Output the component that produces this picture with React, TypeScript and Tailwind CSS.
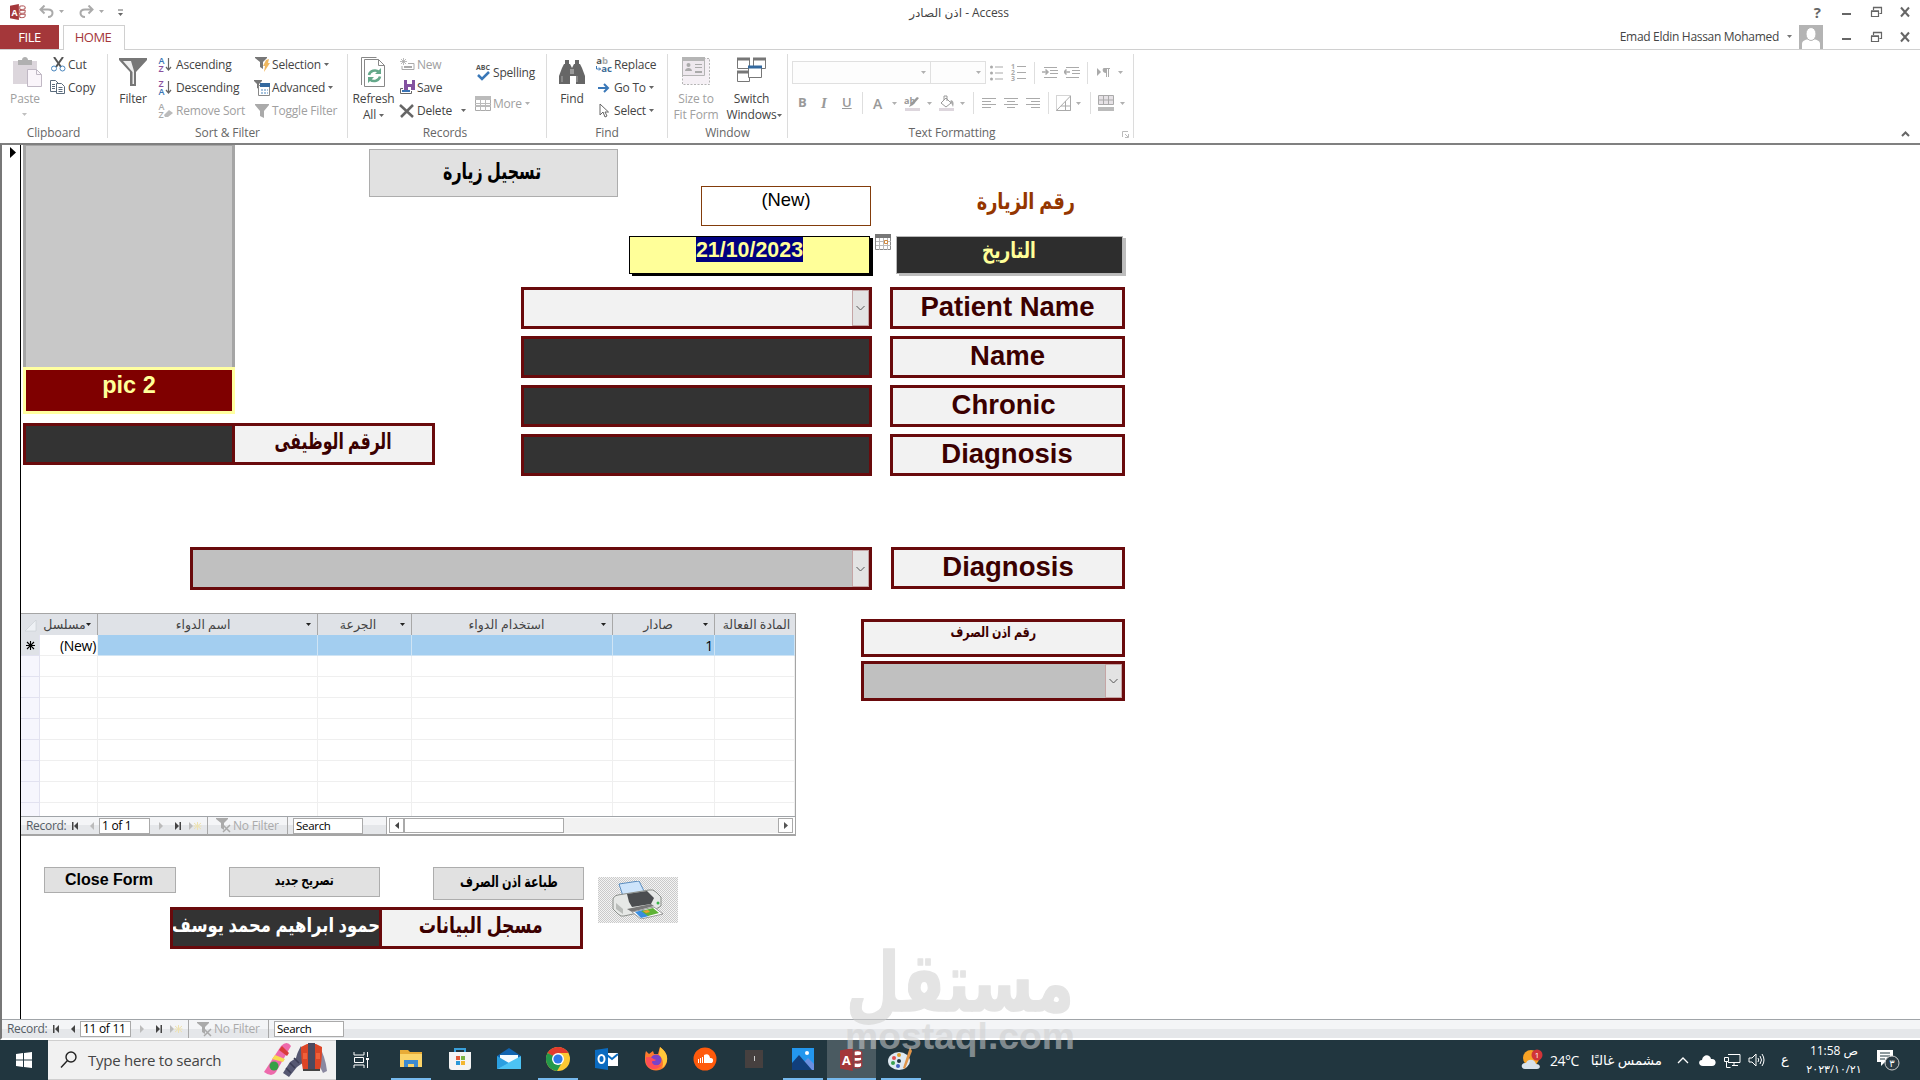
import { FC, ReactNode } from "react";
import clsx from "clsx";

const UI = "font-['Open_Sans','DejaVu_Sans',sans-serif]";
const ARIAL = "font-['Liberation_Sans','DejaVu_Sans',sans-serif]";

interface ICommand {
    icon: ReactNode;
    text: string;
    off?: boolean;
    arrow?: boolean;
    className?: string;
}

const Arrow: FC<{ className?: string }> = ({ className }) => (
    <svg width="5" height="3" viewBox="0 0 5 3" className={clsx("shrink-0", className ?? "text-[#666]")}>
        <path d="M0 0h5L2.5 3z" fill="currentColor" />
    </svg>
);

const Command: FC<ICommand> = ({ icon, text, off, arrow, className }) => (
    <div className={clsx("flex h-[23px] items-center whitespace-nowrap text-[12px] tracking-[-0.2px]", off ? "text-[#a0a0a0]" : "text-[#444]", className)}>
        <span className="mr-[2px] flex w-4 shrink-0 justify-center">{icon}</span>
        {text}
        {arrow && <Arrow className={clsx("ml-[3px]", off ? "text-[#b0b0b0]" : "text-[#666]")} />}
    </div>
);

const Group: FC<{ label: string; width: string; labelClass?: string; children: ReactNode }> = ({ label, width, labelClass, children }) => (
    <div className={clsx("mt-1 flex h-[84px] shrink-0 flex-col border-r border-[#dcdcdc]", width)}>
        <div className="-mt-px flex h-[71px]">{children}</div>
        <div className={clsx("mt-px h-[14px] text-center text-[12px] leading-[18px] tracking-[-0.1px] text-[#666]", labelClass)}>{label}</div>
    </div>
);

const BigButton: FC<{ icon: ReactNode; lines: string[]; off?: boolean; arrow?: boolean; className?: string }> = ({ icon, lines, off, arrow, className }) => (
    <div className={clsx("flex shrink-0 flex-col items-center pt-[4px] text-[12px] leading-4 tracking-[-0.15px]", off ? "text-[#a0a0a0]" : "text-[#444]", className)}>
        <div className="mb-[3px] flex h-[31px] items-start">{icon}</div>
        {lines.map((line, i) => (
            <div key={line} className="flex items-center whitespace-nowrap">
                {line}
                {arrow && i === lines.length - 1 && <Arrow className="ml-[3px] text-[#666]" />}
            </div>
        ))}
    </div>
);

const Funnel: FC<{ size?: number; color?: string }> = ({ size = 14, color = "#777" }) => (
    <svg width={size} height={size} viewBox="0 0 14 14">
        <path d="M0 0h14v1L9 7v7L5 12V7L0 1z" fill={color} />
    </svg>
);

const AccessLogo: FC<{ size: number }> = ({ size }) => (
    <svg width={size} height={size} viewBox="0 0 18 18">
        <path d="M0 2l10-2v18L0 16z" fill="#a4373a" />
        <path d="M11 2.500c3-.8 6-.3 6 .8v2c-2 1-4 1-6 .7zM11 7c2 .6 4.500 .3 6-.3v3c-2 .9-4 .9-6 .6zM11 11.500c2 .5 4.500 .3 6-.4v3c-1 1.300-4 1.500-6 1z" fill="#fff" stroke="#a4373a" strokeWidth="1" />
        <text x="5" y="13" textAnchor="middle" fontSize="10" fontWeight="700" fontFamily="Open Sans" fill="#fff">A</text>
    </svg>
);

const SortIcon: FC<{ top: string; bottom: string; colors: string[]; erase?: boolean }> = ({ top, bottom, colors, erase }) => (
    <div className="flex items-center">
        <div className="flex flex-col text-[9px] leading-[8px] font-semibold tracking-normal">
            <span style={{ color: colors[0] }}>{top}</span>
            <span style={{ color: colors[1] }}>{bottom}</span>
        </div>
        <svg width="9" height="17" viewBox="0 0 9 17">
            {erase ? (
                <path d="M0 13l5-5 4 3-5 4H1z" fill="#bbb" />
            ) : (
                <path d="M4.500 2v12M2 11l2.500 3L7 11" stroke="#666" fill="none" strokeWidth="1.200" />
            )}
        </svg>
    </div>
);

const WindowButtons: FC<{ help?: boolean }> = ({ help }) => (
    <div className="flex h-[24px] items-center text-[#666]">
        {help && <span className="mr-[20px] text-[15px] font-bold">?</span>}
        <svg width="70" height="12" viewBox="0 0 70 12" fill="none" stroke="currentColor">
            <path d="M1 8h9" strokeWidth="2" />
            <path d="M30.500 5.500h7v5h-7zM30 5.500h8M32.500 4V1.500h8v6h-2" strokeWidth="1.200" />
            <path d="M32 1.500h9M30 5h8" strokeWidth="1.500" />
            <path d="M60 1.500l8 9M68 1.500l-8 9" strokeWidth="2" />
        </svg>
    </div>
);

const TitleBar: FC = () => (
    <div className="flex h-[25px] shrink-0 items-start">
        <div className="flex h-[23px] w-[600px] items-center pl-[10px]">
            <AccessLogo size={16} />
            <svg className="ml-[13px]" width="86" height="14" viewBox="0 0 86 14" fill="none" stroke="#aaa">
                <path d="M2 4.500h7c3 0 4.500 1.500 4.500 3.500S12 12 9 12M5.500 .5l-4 4 4 4" strokeWidth="2" />
                <path d="M20 5h5l-2.500 3zM60 5h5l-2.500 3z" fill="#aaa" stroke="none" />
                <path d="M53 4.500h-7c-3 0-4.500 1.500-4.500 3.500s1.500 4 4.500 4M49.500 .5l4 4-4 4" strokeWidth="2" />
                <path d="M79 5h5" stroke="#666" />
                <path d="M79 8h5l-2.500 3z" fill="#666" stroke="none" />
            </svg>
        </div>
        <div className="w-[718px] text-center text-[12px] leading-[25px] tracking-[-0.1px] text-[#444]">اذن الصادر - Access</div>
        <div className="ml-auto pr-[9px]"><WindowButtons help /></div>
    </div>
);

const TabRow: FC = () => (
    <div className="flex h-[25px] shrink-0 border-b border-[#d0d0d0] text-[13px] leading-[24px]">
        <div className="w-[59px] bg-[#a4373a] text-center tracking-[-0.5px] text-white">FILE</div>
        <div className="ml-1 h-[25px] w-[62px] border border-b-0 border-[#d0d0d0] bg-white pr-[2px] text-center leading-[22px] tracking-[-0.5px] text-[#a4373a]">HOME</div>
        <div className="ml-auto flex text-[12px] tracking-[-0.3px] text-[#444]">
            <span>Emad Eldin Hassan Mohamed</span>
            <Arrow className="mt-[10px] ml-2 text-[#777]" />
            <svg className="ml-[7px]" width="24" height="24" viewBox="0 0 24 24">
                <path d="M0 0h24v24H0z" fill="#b4b4b4" />
                <path d="M3 24v-5c0-3 3-4.500 6-4.500h6c3 0 6 1.500 6 4.500v5z" fill="#fff" />
                <ellipse cx="12" cy="9" rx="5" ry="6.500" fill="#fff" stroke="#b4b4b4" />
            </svg>
            <div className="ml-[18px] pr-[9px]"><WindowButtons /></div>
        </div>
    </div>
);

const Sep: FC<{ className?: string }> = ({ className }) => <span className={clsx("h-[22px] w-px bg-[#dedede]", className)} />;

const AlignIcon: FC<{ d: string; className: string }> = ({ d, className }) => (
    <svg className={className} width="15" height="12" viewBox="0 0 15 12" stroke="#aaa" fill="none"><path d={d} /></svg>
);

const TextFormatting: FC = () => (
    <div className="flex flex-col pl-1">
        <div className="mt-[8px] flex h-[23px] items-center">
            <div className="flex h-[23px] w-[139px] items-center justify-end border border-[#e0e0e0] bg-[#fdfdfd] pr-[4px]"><Arrow className="text-[#b0b0b0]" /></div>
            <div className="-ml-px flex h-[23px] w-[56px] items-center justify-end border border-[#e0e0e0] bg-[#fdfdfd] pr-[4px]"><Arrow className="text-[#b0b0b0]" /></div>
            <svg className="ml-1" width="14" height="16" viewBox="0 0 14 16" fill="#aaa">
                <circle cx="1.500" cy="2" r="1.500" /><circle cx="1.500" cy="8" r="1.500" /><circle cx="1.500" cy="14" r="1.500" />
                <path d="M5 1.500h8v1H5zM5 7.500h8v1H5zM5 13.500h8v1H5z" />
            </svg>
            <div className="ml-[7px] flex flex-col text-[7px] leading-[6px] font-bold text-[#aaa]">
                {["1", "2", "3"].map((n) => (
                    <span key={n} className="flex items-center gap-[2px]">{n}<i className="h-px w-[9px] bg-[#aaa]" /></span>
                ))}
            </div>
            <Sep className="ml-2" />
            <svg className="ml-[7px]" width="16" height="12" viewBox="0 0 16 12" stroke="#aaa" fill="none">
                <path d="M2 .5h13M8 3.500h8M8 6.500h8M2 10.500h13" /><path d="M0 5h6M3.500 2.500L6 5 3.500 7.500" strokeWidth="1.500" />
            </svg>
            <svg className="ml-[6px]" width="16" height="12" viewBox="0 0 16 12" stroke="#aaa" fill="none">
                <path d="M2 .5h13M8 3.500h8M8 6.500h8M2 10.500h13" /><path d="M0 5h6M2.500 2.500L0 5l2.500 2.500" strokeWidth="1.500" />
            </svg>
            <Sep className="ml-[7px]" />
            <svg className="ml-[9px]" width="13" height="9" viewBox="0 0 13 9">
                <path d="M0 0l4 4-4 4zM7 0h6v1h-1v8h-1V1h-1v8H9V5C5 5 5 0 7 0z" fill="#aaa" />
            </svg>
            <Arrow className="ml-2 text-[#b0b0b0]" />
        </div>
        <div className="mt-[7px] flex h-[24px] items-center text-[13px] text-[#999]">
            <span className="ml-[6px] w-[23px] font-bold">B</span>
            <span className="w-[21px] font-['Liberation_Serif',serif] text-[15px] font-bold italic">I</span>
            <span className="w-[20px] font-semibold underline">U</span>
            <Sep />
            <span className="ml-[10px] w-[19px] text-[14px] font-semibold">A</span>
            <Arrow className="text-[#b0b0b0]" />
            <svg className="ml-[7px]" width="17" height="17" viewBox="0 0 17 17">
                <path d="M1 13h15v3H1z" fill="#ddd6dd" />
                <text x="0" y="9" fontSize="9" fontWeight="700" fontFamily="Open Sans" fill="#999">ab</text>
                <path d="M15 3L9 10l-4 2 2-4 6-6z" fill="#999" />
            </svg>
            <Arrow className="ml-[6px] text-[#b0b0b0]" />
            <svg className="ml-[6px]" width="17" height="17" viewBox="0 0 17 17">
                <path d="M1 13h15v3H1z" fill="#ddd6dd" />
                <path d="M3 8l5-5 5 5-5 4zM6 5V1h3v5" fill="none" stroke="#999" />
                <path d="M13 5c3 1 3 4 2 7-1-2-1-3-3-5z" fill="#aaa" />
            </svg>
            <Arrow className="ml-[5px] text-[#b0b0b0]" />
            <Sep className="ml-[8px]" />
            <AlignIcon className="ml-[8px]" d="M0 1.500h14M0 4.500h9M0 7.500h14M0 10.500h9" />
            <AlignIcon className="ml-[7px]" d="M0 1.500h14M3 4.500h8M0 7.500h14M3 10.500h8" />
            <AlignIcon className="ml-[7px]" d="M0 1.500h14M5 4.500h9M0 7.500h14M5 10.500h9" />
            <Sep className="ml-[7px]" />
            <svg className="ml-[7px]" width="15" height="16" viewBox="0 0 15 16" fill="none" stroke="#aaa">
                <path d="M.5 .5h14v15H.5z" strokeDasharray="1 1" />
                <path d="M.5 15.500L14.500 1M14.500 1v14.500H.5M9.500 6v9.500M5 11h9.500" />
            </svg>
            <Arrow className="ml-[5px] text-[#b0b0b0]" />
            <Sep className="ml-[9px]" />
            <svg className="ml-[7px]" width="17" height="16" viewBox="0 0 17 16">
                <path d="M.5 .5h15v9H.5zM.5 5h15M5.500 .5v9M10.500 .5v9" fill="#e6e2e6" stroke="#aaa" />
                <path d="M0 12h16v4H0z" fill="#bbb" />
            </svg>
            <Arrow className="ml-[5px] text-[#b0b0b0]" />
        </div>
    </div>
);

const Ribbon: FC = () => (
    <div className="relative flex h-[93px] shrink-0 bg-white">
        <Group label="Clipboard" width="w-[108px]">
            <BigButton
                off
                className="w-[50px]"
                lines={["Paste"]}
                icon={
                    <svg className="ml-[5px]" width="29" height="31" viewBox="0 0 29 31">
                        <path d="M0 4h24v23H0z" fill="#dcd6dc" />
                        <path d="M5 3h4c0-4 6-4 6 0h4v5H5z" fill="#b0b0b0" />
                        <path d="M14.500 12.500h9l5 5v12h-14z" fill="#faf5fa" stroke="#c0b8c4" />
                        <path d="M23.500 12.500v5h5" fill="none" stroke="#c0b8c4" />
                    </svg>
                }
            />
            <div>
                <Command text="Cut" icon={
                    <svg width="15" height="15" viewBox="0 0 15 15" fill="none">
                        <path d="M3 0l7 10M12 0L5 10" stroke="#555" strokeWidth="2" />
                        <circle cx="3" cy="11.500" r="2.500" stroke="#4a86bd" /><circle cx="11.500" cy="11.500" r="2.500" stroke="#4a86bd" />
                    </svg>
                } />
                <Command text="Copy" icon={
                    <svg width="16" height="15" viewBox="0 0 16 15" fill="#fff" stroke="#5a6b7c">
                        <path d="M.5 .5h5l3 3v8h-8zM2 4.500h3M2 6.500h3M2 8.500h3" />
                        <path d="M6.500 3.500h5l3 3v7h-8zM8.500 7.500h4M8.500 9.500h4M8.500 11.500h4" />
                    </svg>
                } />
            </div>
        </Group>
        <Arrow className="absolute top-[63px] left-[22px] text-[#c0c0c0]" />
        <Group label="Sort & Filter" width="w-[240px]">
            <BigButton
                className="w-[50px]"
                lines={["Filter"]}
                icon={
                    <svg width="28" height="30" viewBox="0 0 28 30">
                        <path d="M0 1h28v2L17 15v14h-6V15L0 3z" fill="#777" />
                        <path d="M4 4h8l3 10v13h-1.500V15z" fill="#eee" />
                    </svg>
                }
            />
            <div className="w-[95px]">
                <Command text="Ascending" icon={<SortIcon top="A" bottom="Z" colors={["#3a74b5", "#8a4f9e"]} />} />
                <Command text="Descending" icon={<SortIcon top="Z" bottom="A" colors={["#8a4f9e", "#3a74b5"]} />} />
                <Command off text="Remove Sort" icon={<SortIcon top="A" bottom="Z" colors={["#aaa", "#aaa"]} erase />} />
            </div>
            <div>
                <Command arrow text="Selection" className="pl-px" icon={
                    <svg width="16" height="15" viewBox="0 0 16 15">
                        <path d="M1 0h12v1L9 5v7l-3-2V5L1 1z" fill="#777" /><path d="M12 3l3-1-1 4h2l-6 9 1-6H9z" fill="#f0b860" />
                    </svg>
                } />
                <Command arrow text="Advanced" className="pl-px" icon={
                    <svg width="16" height="16" viewBox="0 0 16 16">
                        <path d="M0 0h8v1L5 4v5L3 8V4L0 1z" fill="#777" /><path d="M4.500 5.500h11v10h-11z" fill="#fff" stroke="#888" />
                        <path d="M6 3h10v4H6z" fill="#33699f" /><path d="M7 10h7M7 13h7" stroke="#4a86bd" strokeDasharray="2 1" />
                    </svg>
                } />
                <Command off text="Toggle Filter" className="pl-px" icon={<Funnel color="#aaa" />} />
            </div>
        </Group>
        <Group label="Records" width="w-[199px]" labelClass="pr-1">
            <BigButton
                arrow
                className="w-[51px]"
                lines={["Refresh", "All"]}
                icon={
                    <svg width="25" height="31" viewBox="0 0 25 31" fill="none" stroke="#888">
                        <path d="M.5 28V.5h15" /><path d="M3.500 2.500h14l6 6v21h-20zM17.500 2.500v6h6" />
                        <path d="M8 18a6 5.500 0 0 1 10-3M19 19.500a6 5.500 0 0 1-10 3" stroke="#64a88a" strokeWidth="2.500" />
                        <path d="M20 11v6h-6zM7 26v-6h6z" fill="#64a88a" stroke="none" />
                    </svg>
                }
            />
            <div className="w-[75px]">
                <Command off text="New" icon={
                    <svg width="15" height="14" viewBox="0 0 15 14" fill="none" stroke="#aaa">
                        <path d="M3.500 0v7M0 3.500h7M1 1l5 5M6 1L1 6" strokeWidth=".8" /><path d="M8 5.500h6v6H2V8" /><path d="M4 9h8" strokeWidth="2" />
                    </svg>
                } />
                <Command text="Save" icon={
                    <svg width="16" height="15" viewBox="0 0 16 15">
                        <path d="M5 0h11v10H5z" fill="#8352a0" /><path d="M8 0h5v4H8zM9 7h3v3H9z" fill="#fff" />
                        <path d="M4 8.500H1.500v5h11V11" fill="none" stroke="#666" /><path d="M3 11h8" stroke="#3a74b5" strokeWidth="2" />
                    </svg>
                } />
                <div className="flex items-center">
                    <Command text="Delete" icon={
                        <svg width="16" height="14" viewBox="0 0 16 14"><path d="M1 1l13 12M14 1L2 13" stroke="#666" strokeWidth="2.500" /></svg>
                    } />
                    <Arrow className="ml-[9px] text-[#666]" />
                </div>
            </div>
            <div className="pt-2 pl-px">
                <Command text="Spelling" icon={
                    <div className="flex flex-col items-center">
                        <span className="text-[7px] leading-[7px] font-bold tracking-normal text-[#555]">ABC</span>
                        <svg width="13" height="10" viewBox="0 0 13 10"><path d="M1 4l4 4 7-7" fill="none" stroke="#3a78b8" strokeWidth="2.500" /></svg>
                    </div>
                } />
                <Command off arrow className="mt-2" text="More" icon={
                    <svg width="16" height="15" viewBox="0 0 16 15"><path d="M.5 .5h15v14H.5z" fill="#fff" stroke="#aaa" /><path d="M0 0h16v4H0zM0 9h16v2H0z" fill="#bbb" /><path d="M5.500 0v15M10.500 0v15M0 7.500h16" stroke="#bbb" /></svg>
                } />
            </div>
        </Group>
        <Group label="Find" width="w-[121px]">
            <BigButton
                className="w-[48px] pl-[2px]"
                lines={["Find"]}
                icon={
                    <svg className="mt-[3px]" width="26" height="24" viewBox="0 0 26 24" fill="#666">
                        <path d="M3 8L5 4h1V0h4v4h1l2 4 2-4h1V0h4v4h1l2 4 3 8v8h-9v-8h-6v8H0v-8z" /><path d="M11 9h4v5h-4z" fill="#999" />
                        <path d="M3 16v6M18 16v6" stroke="#aaa" />
                    </svg>
                }
            />
            <div className="pl-px">
                <Command text="Replace" icon={
                    <div className="flex flex-col text-[9.5px] leading-[8px] font-bold tracking-normal">
                        <span className="text-[#555]">a<span className="text-[#aaa]">b</span></span>
                        <span className="flex items-center text-[#3d6a96]">
                            <svg width="5" height="6" viewBox="0 0 5 6"><path d="M.5 0v3h4M3 1.500L4.500 3 3 4.500" stroke="#3a78b8" fill="none" /></svg>ac
                        </span>
                    </div>
                } />
                <Command arrow text="Go To" icon={
                    <svg width="12" height="10" viewBox="0 0 12 10"><path d="M0 5h10M6 1l4 4-4 4" stroke="#3a78b8" strokeWidth="2" fill="none" /></svg>
                } />
                <Command arrow text="Select" icon={
                    <svg width="10" height="15" viewBox="0 0 10 15"><path d="M1 1v11l3-3 2 5 2-1-2-4h3.500z" stroke="#666" fill="#fff" /></svg>
                } />
            </div>
        </Group>
        <Group label="Window" width="w-[120px]">
            <BigButton
                off
                className="w-[56px]"
                lines={["Size to", "Fit Form"]}
                icon={
                    <svg width="28" height="29" viewBox="0 0 28 29">
                        <path d="M.5 1.500h27v26H.5z" fill="#f5f0f5" stroke="#b5b5b5" strokeDasharray="2 1.500" />
                        <path d="M.5 1.500h22v17H.5z" fill="#eee8ee" stroke="#b5b5b5" /><path d="M0 0h23v4H0z" fill="#b5b5b5" />
                        <circle cx="6.500" cy="8" r="2" fill="#aaa" /><path d="M3 14c0-4 7-4 7 0zM13 7h7v1h-7zM13 10h7v1h-7zM13 14h7v2h-7z" fill="#aaa" />
                    </svg>
                }
            />
            <BigButton
                className="w-[55px]"
                lines={["Switch", "Windows"]}
                icon={
                    <svg width="30" height="26" viewBox="0 0 30 26" fill="#fff" stroke="#777">
                        <path d="M.5 2.500h12v9H.5zM16.500 2.500h12v9h-12zM.5 15.500h12v9H.5z" />
                        <path d="M0 2h13M16 2h13M0 15h13" strokeWidth="3" />
                        <path d="M11.500 10.500h13v10h-13z" /><path d="M11 10h14" stroke="#33699f" strokeWidth="3" />
                    </svg>
                }
            />
            <Arrow className="mt-[61px] -ml-[2px] text-[#666]" />
        </Group>
        <Group label="Text Formatting" width="w-[346px]" labelClass="pr-[17px]">
            <TextFormatting />
        </Group>
        <svg className="mt-auto mb-[5px] -ml-[12px]" width="7" height="7" viewBox="0 0 7 7" fill="none" stroke="#bbb">
            <path d="M.5 6V.5H6M3 3l3 3M6.500 3v3.500H3" />
        </svg>
        <svg className="mt-auto mr-[10px] mb-[6px] ml-auto" width="9" height="6" viewBox="0 0 9 6">
            <path d="M1 5l3.500-3.500L8 5" fill="none" stroke="#666" strokeWidth="2" />
        </svg>
    </div>
);

/* Record navigator shared by the form and the datasheet */
const RecordNav: FC<{ position: string; prev: string; children?: ReactNode }> = ({ position, prev, children }) => (
    <div className="flex h-full items-center border-t border-[#a0a4a8] bg-[linear-gradient(#f4f5f7_50%,#e5e7ea_50%)] text-[12px] tracking-[-0.3px] text-[#555d66]">
        <span className="ml-[5px] w-[46px]">Record:</span>
        <svg width="25" height="8" viewBox="0 0 25 8">
            <path d="M0 0h1.500v8H0zM6 0v8L2 4z" fill="#444" /><path d="M22 0v8l-4-4z" fill={prev} />
        </svg>
        <span className="ml-[2px] h-4 w-[51px] border border-[#aaa] bg-white pl-[2px] leading-[14px] text-black">{position}</span>
        <svg className="ml-[9px]" width="43" height="8" viewBox="0 0 43 8">
            <path d="M0 0l4 4-4 4zM30 0l4 4-4 4z" fill="#bbb" /><path d="M16 0l4 4-4 4zM20.500 0H22v8h-1.500z" fill="#444" />
            <path d="M35 1l7 6M42 1l-7 6M38.500 0v8M34.500 4h8" stroke="#eee2b0" />
        </svg>
        <span className="ml-[5px] h-[18px] w-px bg-[#a8a8a8]" />
        <svg className="ml-2" width="15" height="15" viewBox="0 0 15 15">
            <path d="M0 0h12v1L8 5v7L5 10V5L0 1z" fill="#aaa" /><path d="M7 7l7 7M14 7l-7 7" stroke="#aaa" strokeWidth="1.500" />
        </svg>
        <span className="ml-[2px] w-[54px] tracking-[-0.2px] text-[#aaa]">No Filter</span>
        <span className="h-[18px] w-px bg-[#a8a8a8]" />
        <span className="ml-[5px] h-4 w-[70px] border border-[#aaa] bg-white pl-[2px] text-[11.5px] leading-[14px] text-black">Search</span>
        {children}
    </div>
);

const Box: FC<{ className?: string; children?: ReactNode }> = ({ className, children }) => (
    <div className={clsx("flex shrink-0 justify-center overflow-hidden border-[3px] border-[#690a0c] whitespace-nowrap", className)}>{children}</div>
);

const Combo: FC<{ className?: string }> = ({ className }) => (
    <Box className={clsx("!justify-end", className)}>
        <div className="flex w-[17px] items-center justify-center border border-[#c5a5a5] bg-[#e3e3e3]">
            <svg width="9" height="6" viewBox="0 0 9 6"><path d="M.5 1l4 4 4-4" fill="none" stroke="#555" /></svg>
        </div>
    </Box>
);

const Label: FC<{ text: string; className?: string }> = ({ text, className }) => (
    <Box className={clsx("h-[42px] bg-[#f2f2f2] text-[27.5px] leading-[33px] font-bold text-[#3b0000]", className)}>{text}</Box>
);

const columns = [
    { title: "مسلسل", width: "w-[58px]", pad: "pl-[3px]", value: "(New)" },
    { title: "اسم الدواء", width: "w-[220px]", pad: "pl-[2px]" },
    { title: "الجرعة", width: "w-[94px]", pad: "pr-[2px]" },
    { title: "استخدام الدواء", width: "w-[201px]", pad: "" },
    { title: "صادار", width: "w-[102px]", pad: "" },
    { title: "المادة الفعالة", width: "w-[80px]", pad: "pl-[3px]", last: true },
];

const Datasheet: FC = () => (
    <div className={clsx("flex h-[223px] w-[775px] shrink-0 flex-col border-t border-r border-b-2 border-[#a5a5a5]", UI)}>
        <div className="flex h-[21px] shrink-0 bg-[#dfe2e7] text-[12.5px] text-[#444]">
            <svg className="w-[19px] shrink-0" height="21" viewBox="0 0 19 21"><path d="M15 6v11H4z" fill="#eef1f5" stroke="#c8ccd2" strokeWidth=".6" /></svg>
            {columns.map((c) => (
                <div key={c.title} className={clsx("flex shrink-0 items-center", !c.last && "border-r border-[#a8a8a8]", c.width)}>
                    <span className={clsx("flex-1 text-center leading-[18px] tracking-[-0.2px] whitespace-nowrap", c.pad)}>{c.title}</span>
                    {!c.last && <Arrow className="mr-[6px] text-[#222]" />}
                </div>
            ))}
        </div>
        <div className="h-[181px] shrink-0 overflow-hidden">
            {Array.from({ length: 9 }, (_, row) => (
                <div key={row} className="flex h-[21px] text-[14px] leading-[21px] tracking-[-0.3px] text-black">
                    <div className={clsx("flex w-[19px] items-center justify-center border-r border-b border-[#e2e2f0]", row ? "bg-[#f6f6fd]" : "bg-[#dfe2e7]")}>
                        {row === 0 && <svg width="9" height="9" viewBox="0 0 9 9"><path d="M4.500 0v9M0 4.500h9M1 1l7 7M8 1L1 8" stroke="#000" strokeWidth="1.100" /></svg>}
                    </div>
                    {columns.map((c, i) => (
                        <div key={c.title} className={clsx("border-r border-b pr-px text-right", c.width, row === 0 && i > 0 ? "border-[#cfe4f4] bg-[#a3cef0]" : "border-[#efefef] bg-white")}>
                            {row === 0 && (i === 4 ? "1" : c.value)}
                        </div>
                    ))}
                </div>
            ))}
        </div>
        <div className="h-[18px] shrink-0">
            <RecordNav position="1 of 1" prev="#bbb">
                <div className="ml-[23px] flex h-full flex-1 items-center border-l border-[#a8a8a8] bg-white pl-[2px]">
                    <div className="flex h-[15px] w-[15px] items-center justify-center border border-[#aaa] bg-white">
                        <svg width="4" height="7" viewBox="0 0 4 7"><path d="M4 0v7L0 3.500z" fill="#444" /></svg>
                    </div>
                    <div className="h-[15px] w-[160px] border border-[#aaa] bg-white" />
                    <div className="h-[15px] flex-1 bg-[#f2f2f2]" />
                    <div className="mr-[2px] flex h-[15px] w-[15px] items-center justify-center border border-[#aaa] bg-white">
                        <svg width="4" height="7" viewBox="0 0 4 7"><path d="M0 0v7l4-3.500z" fill="#555" /></svg>
                    </div>
                </div>
            </RecordNav>
        </div>
    </div>
);

const GrayButton: FC<{ className: string; children: ReactNode }> = ({ className, children }) => (
    <div className={clsx("flex shrink-0 items-center justify-center border border-[#adadad] bg-[#e1e1e1] font-bold whitespace-nowrap text-black", className)}>{children}</div>
);

const PrinterIcon: FC = () => (
    <div className="mt-[10px] ml-[14px] flex h-[46px] w-20 items-center justify-center bg-[repeating-conic-gradient(#cacaca_0_25%,#f4f4f4_0_50%)] bg-[length:2px_2px]">
        <svg width="52" height="38" viewBox="0 0 52 38" strokeLinejoin="round">
            <path d="M7 3l20-3 7 14-22 4z" fill="#cde4fb" stroke="#5b8dbf" />
            <path d="M1 19q0-4 5-5l31-5q4-1 7 2l5 5v9l-5 3-32 7q-3 1-6-2l-5-5z" fill="#e6e8e6" stroke="#8a8e8a" />
            <path d="M15 13l20-3 7 7-3 6-19 3-3-5z" fill="#4b4d50" />
            <path d="M4 22l7 6v5l-7-5z" fill="#b9bcb9" />
            <path d="M15 28l24-5 3 2-22 6z" fill="#777" />
            <path d="M20 31l22-5 9 7-22 5z" fill="#fff" stroke="#999" />
            <path d="M23 31l8-2 6 6-8 2z" fill="#3a8ee0" /><path d="M29 30l12-3 6 5-11 3z" fill="#5fb336" /><path d="M31 30l5-1 2 2-4 1z" fill="#f0a030" />
            <circle cx="46" cy="22" r="1.500" fill="#3ab54a" />
        </svg>
    </div>
);

const VisitForm: FC = () => (
    <div className={clsx("flex flex-1 flex-col", ARIAL)}>
        <div className="flex h-[402px] shrink-0">
            <div className="ml-[2px] w-[212px] shrink-0">
                <div className="h-[222px] border-x-[3px] border-t border-[#a5a5a5] bg-[#c8c8c8]" />
                <div className="h-[47px] border-[3px] border-[#ffffa0] bg-[#7f0000] text-center text-[23.5px] leading-[31px] font-bold text-[#ffff99]">pic 2</div>
                <div className="mt-[9px] flex w-[412px]">
                    <Box className="h-[42px] w-[212px] bg-[#333]" />
                    <Box className="h-[42px] w-[200px] border-l-0 bg-[#f2f2f2] text-[23px] leading-[30px] font-bold text-[#3b0000]">
                        <span className="scale-x-68">الرقم الوظيفى</span>
                    </Box>
                </div>
            </div>
            <div className="ml-[134px] flex w-[503px] shrink-0 flex-col items-end">
                <div className="flex h-[91px] w-full items-start justify-between pt-1">
                    <GrayButton className="h-[48px] w-[249px] pr-[2px] pb-[3px] text-[23px]"><span className="scale-x-69">تسجيل زيارة</span></GrayButton>
                    <div className="mt-[37px] mr-[1px] h-[40px] w-[170px] border border-[#833c0b] bg-white text-center text-[18.4px] leading-[26px] text-black">(New)</div>
                </div>
                <div className="relative mr-[2px] h-[38px] w-[241px] border border-black bg-[#ffff99] text-center shadow-[3px_2px_0_#000]">
                    <span className="inline-block h-[25px] bg-[#000080] text-[21.4px] leading-[26px] font-bold text-[#ffff99]">21/10/2023</span>
                    <svg className="absolute -top-[3px] -right-[22px]" width="16" height="16" viewBox="0 0 16 16">
                        <path d="M.5 .5h15v15H.5z" fill="#fff" stroke="#888" /><path d="M0 0h16v4H0z" fill="#777" />
                        <path d="M1 7.500h15M1 11.500h15M4.500 4v12M8.500 4v12M12.500 4v12" stroke="#bbb" /><path d="M9.500 6.500h3v3h-3z" fill="#fff" stroke="#d08a40" />
                    </svg>
                </div>
                <div className="mt-[13px] flex flex-col gap-[7px]">
                    <Combo className="h-[42px] w-[351px] bg-[#f2f2f2]" />
                    <Box className="h-[42px] w-[351px] bg-[#333]" />
                    <Box className="h-[42px] w-[351px] bg-[#333]" />
                    <Box className="h-[42px] w-[351px] bg-[#333]" />
                </div>
            </div>
            <div className="ml-[18px] flex w-[235px] shrink-0 flex-col">
                <div className="flex h-[91px] items-start justify-center pt-[40px] pl-[36px] text-[23px] leading-[32px] font-bold text-[#943600]"><span className="scale-x-77">رقم الزيارة</span></div>
                <div className="mr-[2px] ml-[6px] flex h-[38px] justify-center border border-[#b8b8b8] bg-[#2d2d2d] pr-[2px] text-[22px] leading-[28px] font-bold text-[#ffff99] shadow-[3px_2px_0_#bdbdbd]"><span className="scale-x-77">التاريخ</span></div>
                <div className="mt-[13px] flex flex-col gap-[7px]">
                    <Label text="Patient Name" />
                    <Label text="Name" />
                    <Label text="Chronic" className="pr-[8px]" />
                    <Label text="Diagnosis" className="pr-px" />
                </div>
            </div>
        </div>
        <div className="flex h-[66px] shrink-0 pl-[169px]">
            <Combo className="h-[43px] w-[682px] bg-[#c0c0c0]" />
            <Label text="Diagnosis" className="ml-[19px] w-[234px]" />
        </div>
        <div className="flex h-[254px] shrink-0">
            <Datasheet />
            <div className="mt-[6px] ml-[65px] flex flex-col gap-1">
                <Box className="h-[38px] w-[264px] bg-[#f2f2f2] text-[14.5px] leading-[20px] font-bold text-[#3b0000]"><span className="scale-x-76">رقم اذن الصرف</span></Box>
                <Combo className="h-[40px] w-[264px] bg-[#c0c0c0]" />
            </div>
        </div>
        <div className="flex h-[40px] shrink-0 items-start pl-[23px]">
            <GrayButton className="h-[26px] w-[132px] pr-[2px] text-[16px]">Close Form</GrayButton>
            <GrayButton className="ml-[53px] h-[30px] w-[151px] pb-[3px] text-[14px]"><span className="scale-x-75">تصريح جديد</span></GrayButton>
            <GrayButton className="ml-[53px] h-[33px] w-[151px] pb-[3px] text-[15.5px]"><span className="scale-x-72">طباعة اذن الصرف</span></GrayButton>
            <PrinterIcon />
        </div>
        <div className="flex pl-[149px]">
            <Box className="h-[42px] w-[212px] bg-[#333] text-[20px] leading-[30px] font-bold text-white"><span className="scale-x-82">حمود ابراهيم محمد يوسف</span></Box>
            <Box className="h-[42px] w-[201px] border-l-0 bg-[#f2f2f2] text-[23px] leading-[30px] font-bold text-[#3b0000]"><span className="scale-x-75">مسجل البيانات</span></Box>
        </div>
    </div>
);

const apps: { name: string; open?: boolean; active?: boolean; icon: ReactNode }[] = [
    { name: "explorer", open: true, icon: <svg width="24" height="24" viewBox="0 0 24 24"><path d="M1 3h8l2 2h12v15H1z" fill="#e8ac38" /><path d="M1 7h22v13H1z" fill="#fbd469" /><path d="M5 20v-7h14v7h-4v-3H9v3z" fill="#3d8bd0" /></svg> },
    { name: "store", icon: <svg width="24" height="24" viewBox="0 0 24 24"><path d="M7 6V2h10v4" fill="none" stroke="#39a0dc" strokeWidth="2" /><path d="M1 5h22v15q0 3-3 3H4q-3 0-3-3z" fill="#f4f4f4" /><path d="M8 9h4v4H8z" fill="#e05a38" /><path d="M13 9h4v4h-4z" fill="#7cb342" /><path d="M8 14h4v4H8z" fill="#2a98d8" /><path d="M13 14h4v4h-4z" fill="#f4b730" /></svg> },
    { name: "mail", icon: <svg width="24" height="24" viewBox="0 0 24 24"><path d="M0 9l12-8 12 8v13H0z" fill="#1164b0" /><path d="M3 8h18v8H3z" fill="#f4fbff" /><path d="M0 9l12 7-12 6z" fill="#2a9fe0" /><path d="M24 9v13H0z" fill="#4cc3f4" /></svg> },
    { name: "chrome", open: true, icon: <svg width="24" height="24" viewBox="0 0 24 24"><circle cx="12" cy="12" r="12" fill="#fcc934" /><path d="M12 12L1.600 6A12 12 0 0 1 22.400 6L12 6z" fill="#e33b2e" /><path d="M1.600 6A12 12 0 0 0 11 24l6-10z" fill="#23994a" /><circle cx="12" cy="12" r="6" fill="#fff" /><circle cx="12" cy="12" r="4.600" fill="#2f79e8" /></svg> },
    { name: "outlook", icon: <svg width="24" height="24" viewBox="0 0 24 24"><path d="M12 6h11v13H12z" fill="#fff" /><path d="M12 8l5 4 6-5" fill="none" stroke="#0a6cc0" strokeWidth="2" /><path d="M0 3l13-2v22L0 21z" fill="#0b6bc0" /><ellipse cx="6.500" cy="12" rx="3" ry="4" fill="none" stroke="#fff" strokeWidth="2" /></svg> },
    { name: "firefox", icon: <svg width="24" height="24" viewBox="0 0 24 24"><path d="M2 4l3 3 4-3 1 3h4L16 0c5 4 8 8 7 14-1 6-5 9.500-11 9.500S1 19 1 13C1 9 1 7 2 4z" fill="#ff7a2e" /><path d="M16 0c5 4 8 8 7 14-1 3-3 6-5 7 2-5 1-9-3-13z" fill="#ffc83a" /><circle cx="12" cy="13" r="5.500" fill="#7a43c8" /><path d="M2 10c2 1 3-1 6 1s3 1 4 2c-2 2-4 0-4 2 0 3 6 5 10 2-4 8-15 6-16-2z" fill="#ff4d58" /></svg> },
    { name: "soundcloud", icon: <svg width="24" height="24" viewBox="0 0 24 24"><circle cx="12" cy="12" r="11.500" fill="#ff5a0c" /><path d="M11 8c4-2 6 1 6 3 4-1 4 5 1 5h-7zM9 10h1v6H9zM7 11h1v5H7zM5 12h1v4H5z" fill="#fff" /></svg> },
    { name: "game", icon: <svg width="18" height="18" viewBox="0 0 18 18"><path d="M0 0h18v18H0z" fill="#46403f" /><path d="M9 6h1v5H9z" fill="#ccc" /></svg> },
    { name: "photos", open: true, icon: <svg width="22" height="22" viewBox="0 0 22 22"><path d="M0 0h22v22H0z" fill="#2397ee" /><path d="M12 14l4-4 6 6v6H12z" fill="#6a8fe0" /><path d="M0 15l7-8 13 15H0z" fill="#113f7c" /><circle cx="15" cy="5" r="2" fill="#fff" /></svg> },
    { name: "access", open: true, active: true, icon: <AccessLogo size={23} /> },
    { name: "paint", open: true, icon: <svg width="26" height="24" viewBox="0 0 26 24"><ellipse cx="11" cy="14" rx="11" ry="9" fill="#dfeaf2" /><circle cx="6" cy="11" r="2" fill="#e05050" /><circle cx="11" cy="8" r="2" fill="#e0a030" /><circle cx="5" cy="16" r="2" fill="#3aa050" /><circle cx="10" cy="19" r="2" fill="#4060c0" /><circle cx="11" cy="14" r="2" fill="#203540" /><path d="M22 0l2 4-7 18-2-1z" fill="#e0954a" /></svg> },
];

const Taskbar: FC = () => (
    <div className="flex h-10 shrink-0 items-center bg-[#21363f] text-white">
        <div className="flex w-12 justify-center">
            <svg width="16" height="16" viewBox="0 0 16 16" fill="#fff"><path d="M0 2l7-1v6.500H0zM8 .9L16 0v7.500H8zM0 8.500h7V15l-7-1zM8 8.500h8V16l-8-1z" /></svg>
        </div>
        <div className="flex h-10 w-[288px] items-center border-y border-[#cfcfcf] bg-[#f1f1f1] text-[15px] tracking-[-0.25px] text-[#444]">
            <svg className="ml-[12px]" width="18" height="18" viewBox="0 0 18 18" fill="none" stroke="#222" strokeWidth="1.400"><circle cx="11" cy="6" r="5" /><path d="M7.500 9.500L1 16.500" /></svg>
            <span className="ml-[10px] w-[176px]">Type here to search</span>
            <svg width="64" height="36" viewBox="0 0 64 36">
                <path d="M17 4q6-6 10 0L12 30q-4 6-12 0z" fill="#ee6aac" /><path d="M18 4l7 7-2 3-8-6z" fill="#d93c3c" /><path d="M11 13l10 4-2 3-11-3z" fill="#f8dc50" /><circle cx="10" cy="24" r="4.500" fill="#35a045" />
                <path d="M37 4q-4 7-5 12l-6 4-7 11 6 4 8-10 7-5z" fill="#565872" /><path d="M55 5q6 8 8 24l-4 2-6-12z" fill="#8a88a0" />
                <path d="M26 21l5 5M30 16l5 5M22 26l5 5" stroke="#3b3d55" strokeWidth="1.500" />
                <path d="M37 5l6-3h9l6 3q0 14-2 23H39q-2-10-2-23z" fill="#dc4526" /><path d="M44 1h7v27h-7z" fill="#4b4a60" /><path d="M39 11h4v6h-4zM52 11h4v6h-4z" fill="#f0603a" /><path d="M39 27h17v2H39z" fill="#444" />
            </svg>
        </div>
        <div className="flex w-[50px] justify-center">
            <svg width="17" height="16" viewBox="0 0 17 16" fill="none" stroke="#fff"><path d="M1 0v3h10V0M1 16v-3h10v3M1.500 5.500h9v5h-9zM14.500 0v5M14.500 8v8" /><path d="M13 6h3v2h-3z" fill="#fff" stroke="none" /></svg>
        </div>
        {apps.map((app) => (
            <div key={app.name} className={clsx("flex h-10 w-[49px] flex-col items-center", app.active && "bg-[#4a5a61]")}>
                <div className="flex flex-1 items-center">{app.icon}</div>
                <div className={clsx("h-[2px]", app.active ? "w-[49px]" : "w-10", app.open && "bg-[#76b9ed]")} />
            </div>
        ))}
        <div className="mr-[20px] ml-auto flex items-center text-[13px]">
            <svg width="23" height="23" viewBox="0 0 23 23"><circle cx="11" cy="9" r="8" fill="#f7a325" /><path d="M5 20c-5 0-4-7 1-6 2-5 9-4 10 1 5 0 5 5 1 5z" fill="#d7e2ec" /><circle cx="17" cy="6" r="5.500" fill="#d13438" /><text x="17" y="9" fontSize="8" textAnchor="middle" fontFamily="Open Sans" fill="#fff">1</text></svg>
            <span className="ml-[7px] w-[39px] text-[14px] tracking-[-0.5px]">24°C</span>
            <span className="w-[73px] text-[13.5px] whitespace-nowrap" dir="rtl">مشمس غالبًا</span>
            <svg className="ml-[15px]" width="12" height="7" viewBox="0 0 12 7"><path d="M1 6l5-5 5 5" fill="none" stroke="#fff" strokeWidth="1.300" /></svg>
            <svg className="ml-[10px]" width="17" height="11" viewBox="0 0 17 11"><path d="M4 11C-1 11-1 5 3 5c1-6 8-6 9-1 6-1 6 7 1 7z" fill="#fff" /></svg>
            <svg className="ml-[8px]" width="17" height="15" viewBox="0 0 17 15" fill="none" stroke="#fff"><path d="M4 1.500h12v8H4M8 12.500h6M10 10v3M.5 4.500h4v4h-4zM2.500 8.500v6h4" /></svg>
            <svg className="ml-[7px]" width="17" height="14" viewBox="0 0 17 14" fill="none" stroke="#fff"><path d="M1 5h3l4-4v12L4 9H1zM10 5q1.500 2 0 4M12 3q3 4 0 8M14 1q4 6 0 12" /></svg>
            <span className="ml-[16px] w-[12px] text-[13px]">ع</span>
            <div className="ml-[13px] flex w-[56px] flex-col items-center text-[12px] leading-[18px] tracking-[-0.3px] whitespace-nowrap">
                <span dir="ltr">11:58 ص</span>
                <span dir="ltr" className="text-[11px]">٢٠٢٣/١٠/٢١</span>
            </div>
            <svg className="ml-[14px]" width="24" height="22" viewBox="0 0 24 22"><path d="M1 1h16v12H9l-4 4v-4H1z" fill="#fff" /><path d="M4 4h10M4 7h10M4 10h5" stroke="#21363f" /><circle cx="16" cy="14" r="7" fill="#2b3b44" stroke="#ccc" /><text x="16" y="18" fontSize="10" textAnchor="middle" fill="#fff" fontFamily="DejaVu Sans">٣</text></svg>
        </div>
    </div>
);

const Watermark: FC = () => (
    <svg className="pointer-events-none absolute top-[940px] left-[843px] opacity-55" width="234" height="122" viewBox="0 0 234 122" fill="#cfcfcf">
        <text x="117" y="71" textAnchor="middle" fontSize="82" fontWeight="700" fontFamily="DejaVu Sans" textLength="228" lengthAdjust="spacingAndGlyphs" stroke="#cfcfcf" strokeWidth="1.500" strokeLinejoin="round">مستقل</text>
        <text x="2" y="109" fontSize="37" fontWeight="700" fontFamily="Liberation Sans" textLength="230" lengthAdjust="spacingAndGlyphs">mostaql.com</text>
    </svg>
);

const App: FC = () => {
    return (
        <main className={clsx("relative flex h-[1080px] w-[1920px] flex-col overflow-hidden bg-white", UI)}>
            <TitleBar />
            <TabRow />
            <Ribbon />
            <section className="flex h-[876px] shrink-0 border-t-2 border-l-2 border-t-[#808080] border-l-[#777]">
                <div className="flex w-[19px] shrink-0 justify-end border-r border-black pt-[2px] pr-[4px]">
                    <svg width="6" height="11" viewBox="0 0 6 11"><path d="M0 0v11l6-5.500z" /></svg>
                </div>
                <VisitForm />
            </section>
            <div className="h-[21px] shrink-0 border-b-2 border-l-2 border-b-white border-l-[#777]">
                <RecordNav position="11 of 11" prev="#444" />
            </div>
            <Taskbar />
            <Watermark />
        </main>
    );
};

export default App;
